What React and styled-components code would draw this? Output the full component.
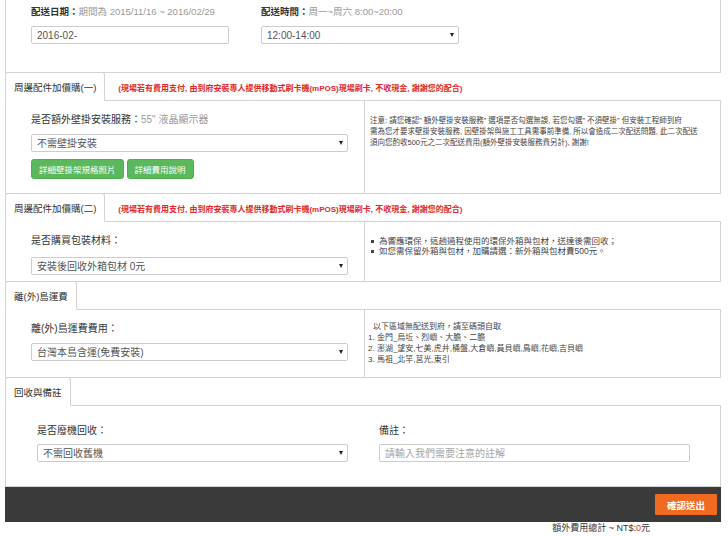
import React from 'react';
import styled, { createGlobalStyle } from 'styled-components';

const Global = createGlobalStyle`
  html, body { margin: 0; padding: 0; background: #fff; }
  body {
    font-family: "Liberation Sans", "Noto Sans CJK TC", sans-serif;
    color: #333;
  }
  * { box-sizing: border-box; }
`;

const LINE = '#d4d4d4';

const Page = styled.div`
  width: 728px;
  padding-left: 5px;
`;

const Frame = styled.div`
  width: 716px;
`;

const TopPanel = styled.div`
  height: 73px;
  border: 1px solid ${LINE};
  border-top: none;
  display: grid;
  grid-template-columns: 198px 198px;
  column-gap: 32px;
  padding: 5px 0 0 25px;
`;

const Field = styled.div`
  display: flex;
  flex-direction: column;
`;

const Label = styled.div`
  font-size: ${p => (p.$strong ? 9.5 : 10)}px;
  line-height: 14px;
  height: 14px;
  white-space: nowrap;
  color: #333;
  font-weight: ${p => (p.$strong ? 'bold' : 'normal')};
  margin-bottom: ${p => p.$gap || 7}px;
`;

const Hint = styled.span`
  color: #9a9a9a;
  font-weight: normal;
`;

const TextInput = styled.input`
  display: block;
  width: ${p => p.$w}px;
  height: 18px;
  border: 1px solid #ccc;
  border-radius: 2px;
  padding: 0 5px;
  font-family: inherit;
  font-size: 10px;
  color: #555;
  outline: none;
  &::placeholder { color: #a5a5a5; }
`;

const SelectWrap = styled.div`
  position: relative;
  width: ${p => p.$w}px;
  height: 18px;
`;

const SelectBox = styled.select`
  display: block;
  appearance: none;
  width: 100%;
  height: 18px;
  border: 1px solid #ccc;
  border-radius: 2px;
  padding: 0 5px;
  background: #fff;
  font-family: inherit;
  font-size: 10px;
  color: #555;
  outline: none;
`;

const Caret = styled.span`
  position: absolute;
  right: 5px;
  top: 7px;
  width: 0;
  height: 0;
  border-left: 2px solid transparent;
  border-right: 2px solid transparent;
  border-top: 4px solid #222;
  pointer-events: none;
`;

const TabBar = styled.div`
  display: flex;
  align-items: flex-end;
  height: 29px;
  margin-top: -1px;
  border-bottom: 1px solid ${LINE};
`;

const Tab = styled.div`
  height: 29px;
  margin-bottom: -1px;
  padding: 3px 8px 0;
  border: 1px solid ${LINE};
  border-bottom-color: #fff;
  border-radius: 3px 3px 0 0;
  background: #fff;
  font-size: 9.5px;
  line-height: 24px;
  color: #333;
  white-space: nowrap;
`;

const Warning = styled.div`
  align-self: center;
  margin: 3px 0 0 13px;
  font-size: 8px;
  font-weight: bold;
  color: #e0282a;
  white-space: nowrap;
`;

const Panel = styled.div`
  display: flex;
  border: 1px solid ${LINE};
  border-top: none;
`;

const Main = styled.div`
  width: 358px;
  padding: ${p => p.$pad};
`;

const Side = styled.div`
  flex: 1;
  padding: ${p => p.$pad};
  border-left: ${p => (p.$boxed ? `1px solid ${LINE}` : 'none')};
  font-size: ${p => p.$size || 8}px;
  line-height: 11px;
  color: #444;
  white-space: nowrap;
`;

const Buttons = styled.div`
  display: flex;
  gap: 3px;
  margin-top: 7px;
`;

const GreenButton = styled.button`
  height: 20px;
  padding: 0 7px;
  border: 1px solid #4cae4c;
  border-radius: 3px;
  background: #5cb85c;
  color: #fff;
  font-family: inherit;
  font-size: 8.5px;
`;

const Bullets = styled.ul`
  margin: 0;
  padding: 0;
  list-style: none;
  font-size: 8.5px;
  line-height: 10px;
`;

const Bullet = styled.li`
  display: flex;
  &::before {
    content: '';
    width: 3px;
    height: 3px;
    margin: 4px 5px 0 0;
    background: #444;
  }
`;

const Indent = styled.div`
  padding-left: 5px;
`;

const Footer = styled.div`
  height: 35px;
  background: #3a3a3a;
  display: flex;
  align-items: center;
  justify-content: flex-end;
  padding-right: 4px;
`;

const SubmitButton = styled.button`
  width: 62px;
  height: 21px;
  border: none;
  border-radius: 1px;
  background: #f06b1f;
  color: #fff;
  font-family: inherit;
  font-size: 9.5px;
  font-weight: bold;
`;

const Total = styled.div`
  padding-right: 71px;
  text-align: right;
  font-size: 9px;
  line-height: 13px;
  color: #333;
`;

const Red = styled.span`
  color: #e0282a;
`;

const Select = ({ w, value }) => (
  <SelectWrap $w={w}>
    <SelectBox defaultValue={value}>
      <option>{value}</option>
    </SelectBox>
    <Caret />
  </SelectWrap>
);

const WARNING =
  '(現場若有費用支付, 由到府安裝專人提供移動式刷卡機(mPOS)現場刷卡, 不收現金, 謝謝您的配合)';

const Section = ({ title, warn, children }) => (
  <>
    <TabBar>
      <Tab>{title}</Tab>
      {warn && <Warning>{WARNING}</Warning>}
    </TabBar>
    <Panel>{children}</Panel>
  </>
);

export default function App() {
  return (
    <Page>
      <Global />
      <Frame>
        <TopPanel>
          <Field>
            <Label $strong>
              配送日期：<Hint>期間為 2015/11/16 ~ 2016/02/29</Hint>
            </Label>
            <TextInput $w={198} defaultValue="2016-02-" />
          </Field>
          <Field>
            <Label $strong>
              配送時間：<Hint>周一~周六 8:00~20:00</Hint>
            </Label>
            <Select w={198} value="12:00-14:00" />
          </Field>
        </TopPanel>

        <Section title="周邊配件加價購(一)" warn>
          <Main $pad="12px 0 14px 25px">
            <Label>
              是否額外壁掛安裝服務：<Hint>55" 液晶顯示器</Hint>
            </Label>
            <Select w={317} value="不需壁掛安裝" />
            <Buttons>
              <GreenButton>詳細壁掛架規格照片</GreenButton>
              <GreenButton>詳細費用說明</GreenButton>
            </Buttons>
          </Main>
          <Side $boxed $size={7.5} $pad="14px 6px 0 5px">
            注意: 請您確認” 額外壁掛安裝服務” 選項是否勾選無誤, 若您勾選” 不須壁掛” 但安裝工程師到府
            <br />
            需為您才要求壁掛安裝服務, 因壁掛架與施工工具需事前準備, 所以會造成二次配送問題, 此二次配送
            <br />
            須向您酌收500元之二次配送費用(額外壁掛安裝服務費另計), 謝謝!
          </Side>
        </Section>

        <Section title="周邊配件加價購(二)" warn>
          <Main $pad="12px 0 6px 25px">
            <Label $gap={9}>是否購買包裝材料：</Label>
            <Select w={317} value="安裝後回收外箱包材 0元" />
          </Main>
          <Side $boxed $pad="14px 6px 0 6px">
            <Bullets>
              <Bullet>為響應環保，這趟過程使用的環保外箱與包材，送達後需回收；</Bullet>
              <Bullet>如您需保留外箱與包材，加購請選：新外箱與包材費500元。</Bullet>
            </Bullets>
          </Side>
        </Section>

        <Section title="離(外)島運費">
          <Main $pad="12px 0 16px 25px">
            <Label>離(外)島運費費用：</Label>
            <Select w={317} value="台灣本島含運(免費安裝)" />
          </Main>
          <Side $boxed $pad="11px 6px 0 3px">
            <Indent>以下區域無配送到府，請至碼頭自取</Indent>
            <div>1. 金門_烏坵、烈嶼、大膽、二膽</div>
            <div>2. 澎湖_望安,七美,虎井,桶盤,大倉嶼,員貝嶼,鳥嶼,花嶼,吉貝嶼</div>
            <div>3. 馬祖_北竿,莒光,東引</div>
          </Side>
        </Section>

        <Section title="回收與備註">
          <Main $pad="18px 0 24px 31px">
            <Label $gap={6}>是否廢機回收：</Label>
            <Select w={311} value="不需回收舊機" />
          </Main>
          <Side $pad="18px 0 24px 15px">
            <Label $gap={6}>備註：</Label>
            <TextInput $w={311} placeholder="請輸入我們需要注意的註解" />
          </Side>
        </Section>

        <Footer>
          <SubmitButton>確認送出</SubmitButton>
        </Footer>
        <Total>
          額外費用總計 ~ NT$:<Red>0</Red>元
        </Total>
      </Frame>
    </Page>
  );
}
